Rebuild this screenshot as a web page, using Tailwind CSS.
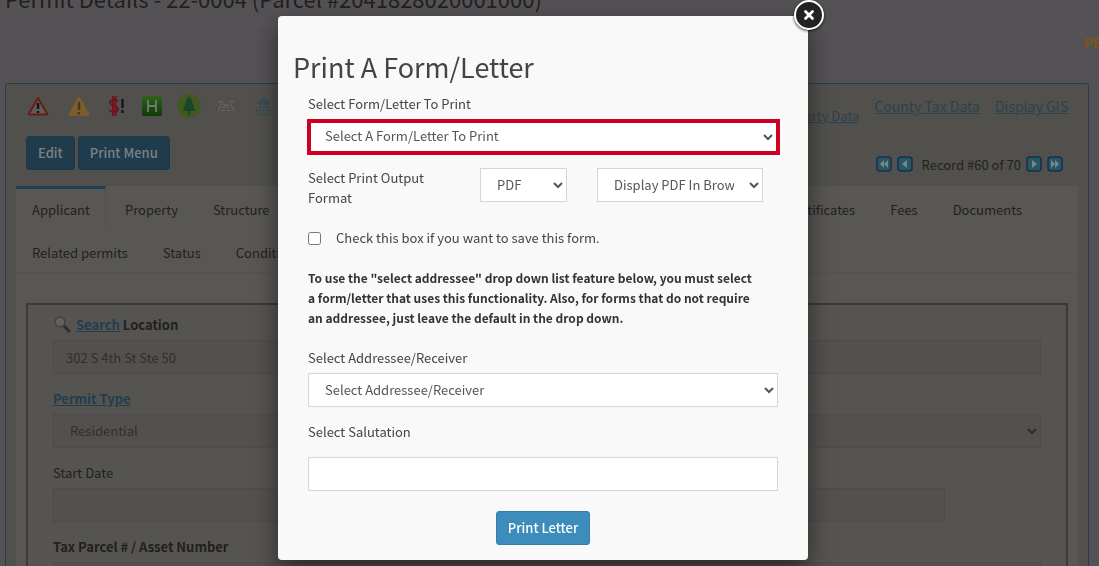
<!DOCTYPE html>
<html lang="en">
<head>
<meta charset="utf-8">
<meta name="viewport" content="width=device-width, initial-scale=1">
<title>Permit Details</title>
<script src="https://cdn.jsdelivr.net/npm/@tailwindcss/browser@4"></script>
</head>
<body class="h-screen overflow-hidden bg-[#555255] font-['Noto_Sans_CJK_SC','Noto_Sans',sans-serif] text-[13px] leading-5 text-[#211f20]">

<div class="h-full overflow-hidden pl-[5px] pr-[10px]">
  <header class="flex h-[25px] items-start border-b border-[#585558]">
    <h1 class="-mt-[19px] text-[22px] leading-[34px] whitespace-nowrap">Permit Details - 22-0004 (Parcel #2041828020001000)</h1>
  </header>
  <p class="-mr-[10px] flex h-[58px] justify-end overflow-hidden pt-2 font-bold text-[#805415]"><span class="w-[15px] whitespace-nowrap">PERMIT</span></p>

  <main class="rounded-t-[3px] border border-[#223f50] bg-[#51504c] px-[10px]">
    <div class="flex h-[102px] justify-between pt-[6px]">
      <div class="pl-[10px]">
        <div class="flex h-8 items-center">
          <svg class="h-6 w-6" viewBox="0 0 24 24" role="img" aria-label="Alert"><path d="M12 4 L21.5 20.500 H2.500Z" fill="#5d5d5b" stroke="#681d17" stroke-width="2" stroke-linejoin="round"/><path d="M12 9v6M12 17v2" stroke="#1c1717" stroke-width="2.500"/></svg>
          <svg class="ml-[17px] h-6 w-6" viewBox="0 0 24 24" role="img" aria-label="Warning"><path d="M12 4 L21.500 20.500 H2.500Z" fill="#7c5d2b" stroke="#7c5d2b" stroke-width="2.500" stroke-linejoin="round"/><path d="M12 8v8M12 18v2.500" stroke="#443820" stroke-width="2.500"/></svg>
          <svg class="ml-[15px] h-6 w-5" viewBox="0 0 20 24" role="img" aria-label="Fees due"><path d="M12 7.500C10.500 5 4 5.500 4 8.500C4 12 12 11 12 15C12 18.500 5.500 19 3.500 16M7 2v20M9.500 2v20" fill="none" stroke="#721019" stroke-width="1.800"/><path d="M16.500 5v9M16.500 16v3" stroke="#10102e" stroke-width="2.200"/></svg>
          <svg class="ml-[15px] h-6 w-[22px]" viewBox="0 0 22 24" role="img" aria-label="Historic"><defs><linearGradient id="g" x2="0" y2="1"><stop stop-color="#315f1b"/><stop offset="1" stop-color="#123b08"/></linearGradient></defs><rect x="1" y="2" width="20" height="20" rx="1.500" fill="url(#g)"/><path d="M7 6v12M15 6v12M7 12h8" stroke="#727d6c" stroke-width="1.800"/></svg>
          <svg class="ml-[14px] h-6 w-6" viewBox="0 0 24 24" role="img" aria-label="Trees"><circle cx="12" cy="12" r="12" fill="#435820"/><path d="M12 2 L16 8.500 H15 L17 12.500 H16 L18.500 17 H13V21H11V17H5.500L8 12.500H7L9 8.500H8Z" fill="#17472a"/></svg>
          <svg class="ml-[16px] h-6 w-[18px]" viewBox="0 0 18 24" role="img" aria-label="Road"><path d="M1 7.500h4M13 7.500h4M5.500 8L1 17M12.500 8L17 17M6 11h6M5 14l2-1h3l2 1M4 16.500h4M10 16.500h4" fill="none" stroke="#6a6968" stroke-width="1"/></svg>
          <svg class="ml-[20px] h-6 w-[18px]" viewBox="0 0 18 24" role="img" aria-label="Wetland"><path d="M5 11V6M3 7l2 4 2-4M9 11V3M7 5l2 6 2-6M13 11V6M11 8l2 3 2-4M3 13h12" fill="none" stroke="#304c59" stroke-width="1.200"/><path d="M1 16.500h16M3 20.500h12" stroke="#304c59" stroke-width="2" stroke-dasharray="2 1"/></svg>
        </div>
        <div class="mt-[14px] flex gap-[3px]">
          <button class="h-[34px] rounded-[3px] border border-[#1d3949] bg-[#203b4b] px-[11px] font-medium text-[#7b8286]">Edit</button>
          <button class="h-[34px] rounded-[3px] border border-[#1d3949] bg-[#203b4b] px-[11px] font-medium text-[#7b8286]">Print Menu</button>
        </div>
      </div>
      <div class="pr-[10px] pt-1 text-[#2b4351]">
        <div class="flex">
          <a href="#" class="mt-[12px] mr-[15px] underline">Property Data</a>
          <a href="#" class="mr-[15px] text-[14px] leading-6 underline">County Tax Data</a>
          <a href="#" class="text-[14px] leading-6 underline">Display GIS</a>
        </div>
        <div class="mt-[27px] flex items-center justify-end gap-[5px] pr-[5px]">
          <button aria-label="First record"><svg class="h-4 w-4" viewBox="0 0 16 16"><rect x="1" y="1" width="14" height="14" rx="3" fill="#285762" stroke="#182c54" stroke-width="1.500"/><path d="M8 4v8L4 8zM12 4v8L8 8z" fill="#75898c"/></svg></button>
          <button aria-label="Previous record"><svg class="h-4 w-4" viewBox="0 0 16 16"><rect x="1" y="1" width="14" height="14" rx="3" fill="#285762" stroke="#182c54" stroke-width="1.500"/><path d="M10 4v8L5 8z" fill="#75898c"/></svg></button>
          <span class="mt-[2px] ml-1 text-[#242220]">Record #60 of 70</span>
          <button aria-label="Next record"><svg class="h-4 w-4" viewBox="0 0 16 16"><rect x="1" y="1" width="14" height="14" rx="3" fill="#285762" stroke="#182c54" stroke-width="1.500"/><path d="M6 4v8L11 8z" fill="#75898c"/></svg></button>
          <button aria-label="Last record"><svg class="h-4 w-4" viewBox="0 0 16 16"><rect x="1" y="1" width="14" height="14" rx="3" fill="#285762" stroke="#182c54" stroke-width="1.500"/><path d="M4 4v8L8 8zM8 4v8L12 8z" fill="#75898c"/></svg></button>
        </div>
      </div>
    </div>

    <section class="rounded-t-[3px] bg-[#595753]">
      <nav class="border-b border-[#545250]">
        <div class="flex h-[43px] gap-[3px] pr-10">
          <a href="#" class="border-t-[3px] border-r border-t-[#203f51] border-r-[#545250] pl-4 pr-[15px] pt-[11px]">Applicant</a>
          <a href="#" class="px-4 pt-[14px]">Property</a>
          <a href="#" class="px-4 pt-[14px]">Structure</a>
          <a href="#" class="ml-auto px-4 pt-[14px]">Certificates</a>
          <a href="#" class="px-4 pt-[14px]">Fees</a>
          <a href="#" class="px-4 pt-[14px]">Documents</a>
        </div>
        <div class="flex h-[43px] gap-[3px]">
          <a href="#" class="px-4 pt-[14px]">Related permits</a>
          <a href="#" class="px-4 pt-[14px]">Status</a>
          <a href="#" class="px-4 pt-[14px]">Conditions</a>
        </div>
      </nav>
      <div class="px-[10px] pt-[30px]">
        <form class="border-2 border-[#3b3a38] bg-[#565450] px-[25px] pt-[10px]">
          <div class="flex h-[25px] items-start gap-[5px] font-bold">
            <svg class="h-[18px] w-[18px]" viewBox="0 0 18 18"><path d="M10.500 10.500L16 16" stroke="#302f30" stroke-width="3" stroke-linecap="round"/><circle cx="7" cy="7" r="5" fill="#62605e" stroke="#434044" stroke-width="1.500"/></svg>
            <label for="loc"><a href="#" class="text-[#223e4e] underline">Search</a> Location</label>
          </div>
          <input id="loc" value="302 S 4th St Ste 50" class="block h-[34px] w-full border border-[#4d4b4f] bg-[#53514e] px-3 text-[#302e2d]">
          <label for="type" class="mt-[15px] mb-[5px] block font-bold text-[#223e4e] underline">Permit Type</label>
          <select id="type" class="block h-[34px] w-full border border-[#4d4b4f] bg-[#53514e] px-3 pb-[2px] text-[#302e2d]"><option>Residential</option></select>
          <label for="start" class="mt-[15px] mb-[5px] block">Start Date</label>
          <input id="start" class="block h-[34px] w-[calc(100%-96px)] border border-[#4d4b4f] bg-[#53514e] px-3">
          <label for="tax" class="mt-[15px] mb-[5px] block font-bold">Tax Parcel # / Asset Number</label>
          <input id="tax" class="block h-[34px] w-full border border-[#4d4b4f] bg-[#53514e] px-3">
        </form>
      </div>
    </section>
  </main>
</div>

<div class="fixed inset-0 flex items-start justify-center pt-4 pr-[13px]">
  <div role="dialog" aria-labelledby="dialog-title" class="relative w-[530px] rounded-[4px] bg-[#f9f9f9] px-[15px] pt-[31px] pb-[15px] text-[#444444] shadow-[0_10px_25px_rgba(0,0,0,0.5)]">
    <button aria-label="Close" class="absolute -top-4 -right-4 flex h-[30px] w-[30px] items-center justify-center rounded-full border-2 border-white bg-[#222222] shadow-[0_1px_3px_rgba(0,0,0,0.8)]">
      <svg class="h-3 w-3" viewBox="0 0 12 12"><path d="M2.500 2.500L9.500 9.500M9.500 2.500L2.500 9.500" stroke="#fff" stroke-width="2.800" stroke-linecap="round"/></svg>
    </button>
    <h2 id="dialog-title" class="text-[27px] leading-[40px]">Print A Form/Letter</h2>
    <form class="px-[15px] pt-[7px]">
      <label for="letter" class="block">Select Form/Letter To Print</label>
      <select id="letter" class="mt-[5px] -ml-px block h-[36px] w-[473px] border-4 border-[#cc0022] bg-white px-[10px] pb-[3px] text-[#555555]"><option>Select A Form/Letter To Print</option></select>
      <div class="mt-[13px] flex h-[44px] items-start">
        <label for="format" class="w-[142px]">Select Print Output Format</label>
        <select id="format" class="ml-[30px] h-[34px] w-[87px] border border-[#d2d6de] bg-white px-3 pb-[2px] text-[#555555]"><option>PDF</option></select>
        <select aria-label="PDF display" class="ml-[30px] h-[34px] w-[166px] border border-[#d2d6de] bg-white px-3 pb-[2px] text-[#555555]"><option>Display PDF In Browser</option></select>
      </div>
      <div class="mt-4 flex items-center">
        <input id="save" type="checkbox" class="h-[13px] w-[13px]">
        <label for="save" class="ml-[15px]">Check this box if you want to save this form.</label>
      </div>
      <p class="mt-5 text-[12px] leading-5 font-bold text-[#333333]">To use the "select addressee" drop down list feature below, you must select<br>a form/letter that uses this functionality. Also, for forms that do not require<br>an addressee, just leave the default in the drop down.</p>
      <label for="addressee" class="mt-5 mb-[5px] block">Select Addressee/Receiver</label>
      <select id="addressee" class="block h-[34px] w-full border border-[#d2d6de] bg-white px-3 pb-[2px] text-[#555555]"><option>Select Addressee/Receiver</option></select>
      <label for="salutation" class="mt-[15px] mb-[15px] block">Select Salutation</label>
      <input id="salutation" class="block h-[34px] w-full border border-[#d2d6de] bg-white px-3">
      <button type="button" class="mx-auto mt-5 block h-[34px] rounded-[3px] border border-[#367fa9] bg-[#3c8dbc] px-[11px] font-medium text-white">Print Letter</button>
    </form>
  </div>
</div>
</body>
</html>
